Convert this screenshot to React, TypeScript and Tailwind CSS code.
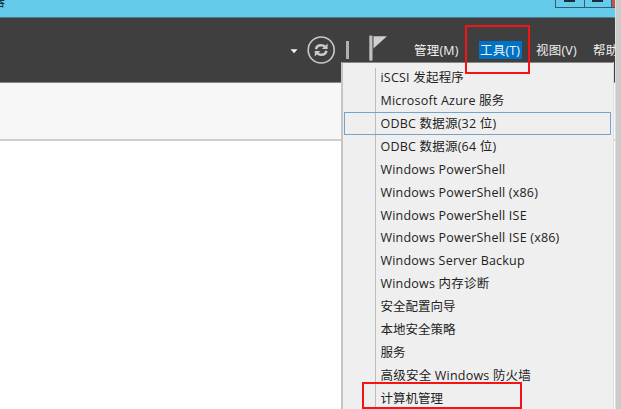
const tools: string[] = [
  'iSCSI 发起程序',
  'Microsoft Azure 服务',
  'ODBC 数据源(32 位)',
  'ODBC 数据源(64 位)',
  'Windows PowerShell',
  'Windows PowerShell (x86)',
  'Windows PowerShell ISE',
  'Windows PowerShell ISE (x86)',
  'Windows Server Backup',
  'Windows 内存诊断',
  '安全配置向导',
  '本地安全策略',
  '服务',
  '高级安全 Windows 防火墙',
  '计算机管理',
];

const highlighted = 'ODBC 数据源(32 位)';

function trackingFor(label: string) {
  return /[A-Za-z]/.test(label) ? 'tracking-[0.21px]' : 'tracking-normal';
}

function TitleBar() {
  return (
    <div className="flex h-[18px] justify-between border-b border-[#51798a] bg-[#65cbeb]">
      <div className="flex h-3 w-[5px] justify-end overflow-hidden">
        <span className="-mt-[7px] shrink-0 text-[14px] leading-4 text-[#17333c]">器</span>
      </div>
      <div className="flex h-2 w-[60px] overflow-hidden border-b border-l border-[#315d6c]">
        <div className="flex w-[29px] justify-center border-r border-[#315d6c]">
          <div className="h-[2px] w-[11px] bg-[#173038]" />
        </div>
        <div className="flex w-[28px] justify-center border-r border-[#315d6c]">
          <div className="h-[2px] w-[11px] bg-[#173038]" />
        </div>
        <div className="w-[3px] bg-[#c75050]" />
      </div>
    </div>
  );
}

function HeaderIcons() {
  return (
    <div className="flex h-full w-[414px] shrink-0 items-start pl-[290px]">
      <svg className="mt-[31px] h-[5px] w-[8px]" viewBox="0 0 8 5">
        <path d="M.5 .3h7L4 4.2z" fill="#f4f4f4" />
      </svg>
      <svg className="ml-[9px] mt-[18px] h-7 w-7" viewBox="0 0 28 28" fill="none" stroke="#c9c9c9">
        <circle cx="14.2" cy="14" r="13" strokeWidth="1.6" />
        <path
          d="M9 13.2C9.4 10.4 12 9.1 14.5 9.2c1.5 0 2.6.6 3.6 1.7M19.4 14.8c-.4 2.8-3 4.1-5.5 4-1.5 0-2.6-.6-3.6-1.7"
          strokeWidth="2.5"
        />
        <path d="M20.6 7.5v5.4h-5.7zM7.8 20.5v-5.4h5.7z" fill="#c9c9c9" stroke="none" />
      </svg>
      <div className="ml-[11px] mt-[23px] h-[18px] w-[3px] bg-[#b0b0b0]" />
      <svg className="ml-[20px] mt-[17px] h-[26px] w-[19px]" viewBox="0 0 19 26">
        <path d="M.3 .6h3.2v25H.3z" fill="#c0c0c0" />
        <path d="M4.4 1.2H18L4.4 13.6z" fill="#d0d0d0" />
        <path d="M4 1v13" stroke="#777" strokeWidth=".8" />
      </svg>
    </div>
  );
}

function Header() {
  return (
    <div className="flex h-[65px] overflow-hidden border-b border-[#888] bg-[#3f3f3f] text-[12.5px] leading-[18px] text-[#f1f1f1]">
      <HeaderIcons />
      <nav className="flex shrink-0 items-start whitespace-nowrap pt-[23px] tracking-[0.2px]">
        <span className="w-[65px] pt-px">管理(M)</span>
        <span className="h-[18px] w-[43px] bg-[#0072c6] pl-px pt-px">工具(T)</span>
        <span className="ml-[14px] w-[57px] pt-px">视图(V)</span>
        <span className="pt-px">帮助(H)</span>
      </nav>
    </div>
  );
}

function ToolsMenu() {
  return (
    <div className="absolute left-[341px] top-[62px] h-[360px] w-[273px] border-l-2 border-r border-t border-l-[#c5c5c5] border-r-[#dfdfdf] border-t-[#888] bg-[#efefef]">
      <div className="absolute bottom-0 left-[32px] top-[5px] w-px bg-[#bcbcbc]" />
      <ul className="relative pt-[3px]">
        {tools.map((label) => (
          <li
            key={label}
            className={`ml-px mr-[2px] flex h-[22.9px] items-center border pl-[35.5px] pt-[2px] text-[12.5px] leading-none whitespace-nowrap text-[#222] ${trackingFor(label)} ${
              label === highlighted ? 'border-[#70a5cf]' : 'border-transparent'
            }`}
          >
            {label}
          </li>
        ))}
      </ul>
    </div>
  );
}

export default function App() {
  return (
    <div className="relative flex h-[409px] w-[621px] overflow-hidden bg-white font-['Open_Sans','Noto_Sans_CJK_SC',sans-serif]">
      <div className="w-[615px] shrink-0 overflow-hidden">
        <TitleBar />
        <Header />
        <div className="h-[58px] border-b-2 border-[#cdcdcd] bg-[#f7f7f7]" />
      </div>
      <div className="w-[6px] shrink-0 border-l border-[#dedede] bg-[#cbcbcb]" />
      <ToolsMenu />
      <div className="absolute left-[465px] top-[25px] h-[49px] w-[65px] border-2 border-[#f51313]" />
      <div className="absolute left-[362px] top-[382px] h-[27px] w-[160px] border-2 border-[#f51313]" />
    </div>
  );
}
